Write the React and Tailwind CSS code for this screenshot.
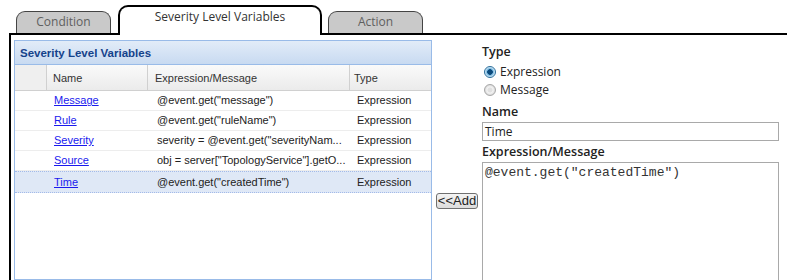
import React from 'react';

const rows = [
  { name: 'Message', expr: '@event.get("message")', type: 'Expression' },
  { name: 'Rule', expr: '@event.get("ruleName")', type: 'Expression' },
  { name: 'Severity', expr: 'severity = @event.get("severityNam...', type: 'Expression' },
  { name: 'Source', expr: 'obj = server["TopologyService"].getO...', type: 'Expression' },
  { name: 'Time', expr: '@event.get("createdTime")', type: 'Expression', selected: true },
];

const uiFont = { fontFamily: '"Open Sans", "Noto Sans", sans-serif' };

function Tab({ label, active, width }) {
  if (active) {
    return (
      <div className={`${width} h-[30px] rounded-t-[10px] border-2 border-b-0 border-black bg-white flex justify-center pt-[1px] text-[12px] text-[#333]`}>
        {label}
      </div>
    );
  }
  return (
    <div className={`${width} h-[24px] flex flex-col`}>
      <div className="flex-1 rounded-t-[9px] border border-b-0 border-[#444] bg-[#c9c9c9] flex justify-center pt-[1px] text-[12px] text-[#5f5f5f]">
        {label}
      </div>
      <div className="h-[2px] bg-black" />
    </div>
  );
}

function Radio({ checked, label }) {
  return (
    <label className="flex items-center gap-[4px] h-[18px] pl-[2px] text-[12px] text-[#222]">
      <span className={`w-[12px] h-[12px] rounded-full border ${checked ? 'border-[#2a6d9b] bg-[radial-gradient(circle,#0b4a7c_0_2.5px,#6fb2dd_3px,#d8eefa_5px)]' : 'border-[#a7a7a7] bg-[radial-gradient(circle,#e0e0e0_0_2px,#f3f3f3_3px,#cfcfcf_6px)]'}`} />
      {label}
    </label>
  );
}

export default function App() {
  return (
    <div className="w-[787px] h-[280px] bg-white overflow-hidden flex flex-col" style={uiFont}>
      {/* tab strip */}
      <div className="flex items-end h-[35px]">
        <div className="w-[9px]" />
        <div className="w-[7px] h-[2px] bg-black" />
        <Tab label="Condition" width="w-[95px]" />
        <div className="w-[7px] h-[2px] bg-black" />
        <Tab label="Severity Level Variables" active width="w-[204px]" />
        <div className="w-[6px] h-[2px] bg-black" />
        <Tab label="Action" width="w-[95px]" />
        <div className="flex-1 h-[2px] bg-black" />
      </div>

      {/* body */}
      <div className="flex-1 ml-[9px] border-l-2 border-black flex min-h-0">
        {/* grid panel */}
        <div className="ml-[3px] mt-[5px] w-[418px] border border-[#99bbe8] flex flex-col">
          <div className="h-[24px] bg-[linear-gradient(#e2ecf8,#c8daf1)] border-b border-[#99bbe8] flex items-center pt-[2px] pl-[5px] text-[11.5px] font-bold text-[#15428b]" style={{ fontFamily: '"Liberation Sans", Arial, sans-serif' }}>
            Severity Level Variables
          </div>
          <div className="flex-1 bg-white" style={{ fontFamily: '"Liberation Sans", Arial, sans-serif' }}>
            <div className="flex h-[26px] bg-[linear-gradient(#fafafa,#ebebeb)] border-b border-[#d0d0d0] text-[11px] text-[#333]">
              <div className="w-[32px] bg-[#efefef] border-r border-[#d0d0d0]" />
              <div className="w-[101px] border-r border-[#d0d0d0] flex items-center pt-[2px] pl-[6px]">Name</div>
              <div className="w-[202px] border-r border-[#d0d0d0] flex items-center pt-[2px] pl-[7px]">Expression/Message</div>
              <div className="flex-1 flex items-center pt-[2px] pl-[4px]">Type</div>
            </div>
            {rows.map((r) => (
              <div
                key={r.name}
                className={`flex text-[11px] text-[#222] ${r.selected ? 'h-[22px] bg-[#dfe8f6] border-y border-dotted border-[#a3bae9]' : 'h-[20px] border-b border-[#ededed]'}`}
              >
                <div className="w-[32px]" />
                <div className="w-[101px] flex items-center pl-[7px]">
                  <a href="#" className="text-[#1a1aee] underline">{r.name}</a>
                </div>
                <div className="w-[202px] flex items-center pl-[9px] whitespace-nowrap overflow-hidden">{r.expr}</div>
                <div className="flex-1 flex items-center pl-[7px]">{r.type}</div>
              </div>
            ))}
          </div>
        </div>

        {/* add button */}
        <div className="w-[50px] flex justify-center pt-[158px]">
          <button className="h-[16px] px-[1px] rounded-[3px] border border-[#707070] bg-[linear-gradient(#f4f4f4,#dcdcdc)] text-[13px] leading-[14px] text-[#222]" style={{ fontFamily: '"Liberation Sans", Arial, sans-serif' }}>
            &lt;&lt;Add
          </button>
        </div>

        {/* form */}
        <div className="flex-1 pr-[8px] pt-[8px] flex flex-col">
          <div className="text-[12.5px] font-semibold text-[#222] h-[20px] leading-[18px]">Type</div>
          <Radio checked label="Expression" />
          <Radio label="Message" />
          <div className="text-[12.5px] font-semibold text-[#222] h-[23px] leading-[26px]">Name</div>
          <div className="h-[19px] border border-[#a9a9a9] flex items-center pl-[2px] text-[12px] text-[#222]">Time</div>
          <div className="text-[12.5px] font-semibold text-[#222] h-[21px] leading-[21px]">Expression/Message</div>
          <div className="flex-1 border border-[#a9a9a9] border-b-0 pl-[2px] pt-[2px] text-[13px] leading-[16px] text-[#333]" style={{ fontFamily: '"Liberation Mono", "Courier New", monospace' }}>
            @event.get("createdTime")
          </div>
        </div>
      </div>
    </div>
  );
}
